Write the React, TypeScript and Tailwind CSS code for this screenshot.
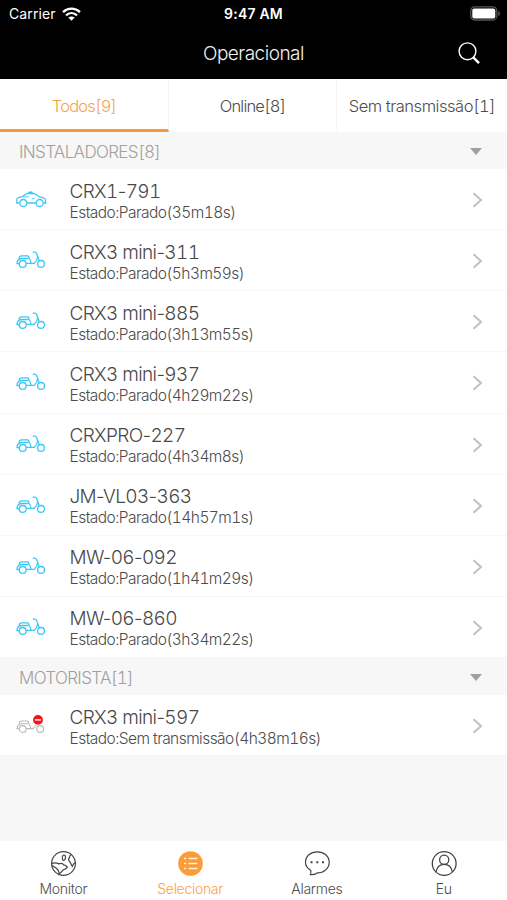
import { useState } from 'react';

interface Device {
  name: string;
  status: string;
  type: 'car' | 'scooter' | 'offline';
}

interface Group {
  title: string;
  devices: Device[];
}

const tabs = ['Todos[9]', 'Online[8]', 'Sem transmissão[1]'];

const groups: Group[] = [
  {
    title: 'INSTALADORES[8]',
    devices: [
      { name: 'CRX1-791', status: 'Parado(35m18s)', type: 'car' },
      { name: 'CRX3 mini-311', status: 'Parado(5h3m59s)', type: 'scooter' },
      { name: 'CRX3 mini-885', status: 'Parado(3h13m55s)', type: 'scooter' },
      { name: 'CRX3 mini-937', status: 'Parado(4h29m22s)', type: 'scooter' },
      { name: 'CRXPRO-227', status: 'Parado(4h34m8s)', type: 'scooter' },
      { name: 'JM-VL03-363', status: 'Parado(14h57m1s)', type: 'scooter' },
      { name: 'MW-06-092', status: 'Parado(1h41m29s)', type: 'scooter' },
      { name: 'MW-06-860', status: 'Parado(3h34m22s)', type: 'scooter' },
    ],
  },
  {
    title: 'MOTORISTA[1]',
    devices: [{ name: 'CRX3 mini-597', status: 'Sem transmissão(4h38m16s)', type: 'offline' }],
  },
];

function CarIcon() {
  return (
    <svg width="32" height="18" viewBox="0 0 32 18" fill="none" stroke="#3cc8f6" strokeWidth="1.3">
      <path d="M4.800 13H1.800V9.600c0-1.200.8-1.900 2.200-2.200l3.600-.8 2.600-2c.9-.7 1.700-1 2.800-1h5c1.500 0 2.500.3 3.600 1.100l2.900 2.200 4 1c1.500.4 2.100 1.300 2.100 2.600V13h-2.400M11.800 13h9.400" />
      <path d="M7.600 6.800h6.600M17 8.500h2.500" strokeWidth="0.9" />
      <path d="M12.700 3.400c.3-1.500 1.300-2.200 2.800-2.200s2.500.7 2.800 2.200z" fill="#3cc8f6" stroke="none" />
      <circle cx="8.300" cy="13" r="3.500" />
      <circle cx="24.700" cy="13" r="3.500" />
    </svg>
  );
}

function ScooterIcon() {
  return (
    <svg width="32" height="18" viewBox="0 0 32 18" fill="none" stroke="#3cc8f6" strokeWidth="1.3">
      <path d="M17.700 1.200h2.200c.9 0 1.400.5 1.700 1.400l1.100 2.900c-.2 2.600-1.400 5-3.400 6.900H11.200" />
      <path d="M4 7.300c.3-1.600 1.300-2.500 2.800-2.500h5.600c1.100 0 1.600.8 1.400 2.100 1.400 1.500 2.100 3.300 2.200 5.500M4.200 12.600H2c0-3.200 2.200-5.100 5.600-5.100h5.600" />
      <path d="M22.700 5.500l1.500 4.200" />
      <circle cx="7.700" cy="12.900" r="3.400" />
      <circle cx="26" cy="12.900" r="3.400" />
    </svg>
  );
}

function OfflineIcon() {
  return (
    <svg width="32" height="20" viewBox="0 0 32 20" fill="none" stroke="#b8b8b8" strokeWidth="1.1">
      <path d="M20.800 9.800c-.5 1.500-1.300 2.700-2.500 3.800h-7.100" />
      <path d="M4 8.500c.3-1.600 1.300-2.500 2.800-2.500h5.300c1.100 0 1.600.8 1.400 2.100 1.400 1.500 2.100 3.300 2.200 5.500M4.200 13.800H2c0-3.200 2.200-5.100 5.600-5.100h5.300" />
      <circle cx="7.700" cy="14" r="3.400" />
      <circle cx="25.200" cy="14" r="3.400" />
      <circle cx="23" cy="4.900" r="4.900" fill="#fa1016" stroke="none" />
      <path d="M20 4.900h6" stroke="#ffd6d6" strokeWidth="1.700" />
    </svg>
  );
}

function DeviceIcon({ type }: { type: Device['type'] }) {
  if (type === 'car') return <CarIcon />;
  if (type === 'offline') return <OfflineIcon />;
  return <ScooterIcon />;
}

function StatusBar() {
  return (
    <div className="grid grid-cols-3 items-center h-[27px] text-white">
      <div className="flex items-center gap-[6px] pl-[9px]">
        <span className="text-[14px] font-normal tracking-[0.1px]">Carrier</span>
        <svg width="19" height="14" viewBox="0 0 19 14" fill="none" stroke="white" strokeWidth="2.300">
          <path d="M1 5.100c5-4.600 12-4.600 17 0M4 8.300c3.300-3 7.700-3 11 0" />
          <path d="M9.500 13.800 6.400 10.600c1.900-1.500 4.300-1.500 6.200 0z" fill="white" stroke="none" />
        </svg>
      </div>
      <span className="text-center text-[14px] font-semibold tracking-[0.2px]">9:47 AM</span>
      <div className="flex justify-end pr-[6px]">
        <svg width="31" height="15" viewBox="0 0 31 15">
          <rect x=".8" y=".8" width="26" height="13.200" rx="4" fill="none" stroke="#555" strokeWidth="1.300" />
          <rect x="2.300" y="2.400" width="23" height="10" rx="2" fill="white" />
          <path d="M28.200 5v5c2.400-1 2.400-4 0-5z" fill="#555" />
        </svg>
      </div>
    </div>
  );
}

function NavBar() {
  return (
    <div className="grid grid-cols-[80px_1fr_80px] items-center h-[52px] text-[#f2f2f2]">
      <span />
      <h1 className="pt-[2px] text-center text-[19px] tracking-[-0.5px]">Operacional</h1>
      <button className="flex justify-end pr-[26px]">
        <svg width="23" height="23" viewBox="0 0 23 23" fill="none" stroke="white">
          <circle cx="9.500" cy="9.300" r="8.400" strokeWidth="1.400" />
          <path d="m15 15.200 6 6" strokeWidth="2.500" />
        </svg>
      </button>
    </div>
  );
}

function GroupHeader({ title }: { title: string }) {
  return (
    <div className="flex items-center justify-between h-[37px] bg-[#f7f7f7] pl-[19px] pr-[25px]">
      <span className="pt-[4px] text-[17px] text-[#a0a0a0] tracking-[-0.65px] tabular-nums">{title}</span>
      <svg width="12" height="8" viewBox="0 0 12 8" fill="#a0a0a0">
        <path d="M0 .9h12L6 7.900z" />
      </svg>
    </div>
  );
}

// keeps the digits aligned between rows without widening the hyphens
function DeviceName({ name }: { name: string }) {
  return (
    <p className="text-[19px] leading-[22px] text-[#484848] tracking-[-0.65px]">
      {name.split(/(\d+)/).map((part, idx) => (
        <span key={idx} className={/\d/.test(part) ? 'tabular-nums' : ''}>
          {part}
        </span>
      ))}
    </p>
  );
}

function DeviceRow({ device }: { device: Device }) {
  return (
    <li className="flex items-center h-[61.125px] border-b border-[#f6f6f6] pl-[15px] pr-[24px]">
      <div className="w-[54.500px]">
        <DeviceIcon type={device.type} />
      </div>
      <div className="flex-1 pt-[5px]">
        <DeviceName name={device.name} />
        <p className="text-[15.500px] leading-[20px] text-[#4c4c4c] tracking-[-0.55px] tabular-nums">
          Estado:{device.status}
        </p>
      </div>
      <svg className="mt-[2px]" width="11" height="16" viewBox="0 0 11 16" fill="none" stroke="#c0c0c0" strokeWidth="2">
        <path d="m1.500 1.300 7.500 6.700-7.500 6.700" />
      </svg>
    </li>
  );
}

const menu = [
  {
    label: 'Monitor',
    icon: (
      <svg width="26" height="26" viewBox="0 0 26 26" fill="none" stroke="#444" strokeWidth="1.200">
        <circle cx="13.500" cy="13.500" r="11.900" />
        <path d="M1.700 13.600c2.400-1.200 5-.9 7.300.3 2-.7 3.900-.3 4.600 1 1.900.2 3 1 3.700 2.200-.8 1.500-2.300 2.200-3.900 2.700-1.400 1.200-2.600 2.900-4.400 4.300.2-2.500-.7-4.600-3.100-6.200-1.500-.8-2.600-1.800-4-2.200" />
        <path d="M13.200 5.300c1.400-.8 2.500.3 2.300 2.300s-1.300 3.300-2.400 2.600-1.100-4.100.1-4.900zM21.200 4.500c-1.200.5-1.800 1.800-1.700 3-.9.9-1.100 2.400-.3 3.600 1.500.8 1.500 3.300 3.100 5.200.6-1.500 1.300-2.700 2.700-3.500" />
      </svg>
    ),
  },
  {
    label: 'Selecionar',
    icon: (
      <svg width="26" height="26" viewBox="0 0 26 26" fill="#fd9b38">
        <circle cx="13.500" cy="13.500" r="12.300" />
        <path d="M7 8.500h2.200M11.500 8.500h9M7 13.500h2.200M11.500 13.500h9M7 18.500h2.200M11.500 18.500h9" stroke="#fff3e4" strokeWidth="1.500" />
      </svg>
    ),
  },
  {
    label: 'Alarmes',
    icon: (
      <svg width="26" height="26" viewBox="0 0 26 26" fill="none" stroke="#444" strokeWidth="1.200">
        <path d="M6.700 20.300c-3.200-1.800-5.200-4.700-5.200-8C1.500 6.300 6.600 1.800 13.300 1.800s11.900 4.500 11.900 10.500-5.200 10.600-11.900 10.600c-1.800 1.200-4.200 2-6.900 1.700.6-1.200.9-2.600.3-4.300z" />
        <path d="M6.500 12.300h2M12.300 12.300h2M18 12.300h2" strokeWidth="2" />
      </svg>
    ),
  },
  {
    label: 'Eu',
    icon: (
      <svg width="26" height="26" viewBox="0 0 26 26" fill="none" stroke="#444" strokeWidth="1.300">
        <circle cx="13.200" cy="13.500" r="11.900" />
        <circle cx="13.200" cy="9.700" r="4.600" />
        <path d="M5 22c.8-4.800 3.700-7.700 8.200-7.700s7.400 2.900 8.200 7.700" />
      </svg>
    ),
  },
];

function App() {
  const [tab, setTab] = useState(0);

  return (
    <div className="flex flex-col w-[507px] h-[900px] bg-[#f7f7f7] font-['Inter',sans-serif] font-light overflow-hidden">
      <header className="h-[79px] shrink-0 bg-black">
        <StatusBar />
        <NavBar />
      </header>

      <nav className="grid grid-cols-[169px_168px_1fr] h-[53px] shrink-0 bg-white">
        {tabs.map((label, idx) => (
          <button
            key={label}
            onClick={() => setTab(idx)}
            className={`pt-[4px] text-[16.500px] whitespace-nowrap border-b-[3px] tabular-nums ${
              idx === 2 ? 'tracking-[-0.45px]' : 'tracking-[-0.8px]'
            } ${tab === idx ? 'text-[#f7a14b] border-b-[#f49b40]' : 'text-[#4c4c4c] border-b-transparent'} ${
              idx < 2 ? 'border-r border-r-[#f6f6f6]' : ''
            }`}
          >
            {label}
          </button>
        ))}
      </nav>

      <main className="flex-1">
        {groups.map((group) => (
          <section key={group.title}>
            <GroupHeader title={group.title} />
            <ul className="bg-white">
              {group.devices.map((device) => (
                <DeviceRow key={device.name} device={device} />
              ))}
            </ul>
          </section>
        ))}
      </main>

      <footer className="grid grid-cols-4 h-[59px] shrink-0 bg-white">
        {menu.map((item) => (
          <button key={item.label} className="flex flex-col items-center pt-[9px]">
            {item.icon}
            <span
              className={`mt-[3px] text-[14px] leading-[20px] tracking-[-0.3px] ${
                item.label === 'Selecionar' ? 'text-[#fda04a]' : 'text-[#4c4c4c]'
              }`}
            >
              {item.label}
            </span>
          </button>
        ))}
      </footer>
    </div>
  );
}

export default App;
